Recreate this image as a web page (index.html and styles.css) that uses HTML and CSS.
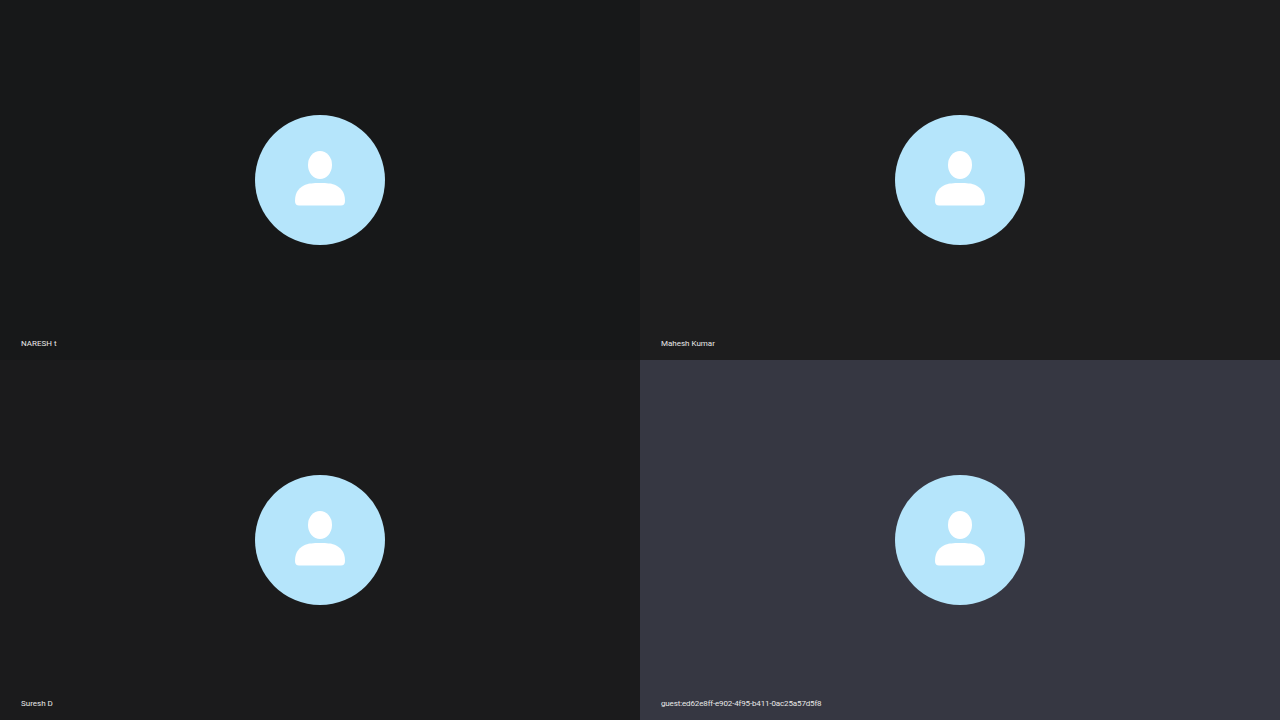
FILE: index.html
```html
<!DOCTYPE html>
<html lang="en">
<head>
  <meta charset="UTF-8">
  <meta name="viewport" content="width=device-width, initial-scale=1.0">
  <title>Video Call</title>
  <link rel="stylesheet" href="styles.css">
</head>
<body>
  <div class="call-grid">
    <div class="tile tile-one">
      <div class="avatar">
        <svg viewBox="0 0 130 130" width="130" height="130"><ellipse cx="65" cy="50" rx="12" ry="14"/><path d="M40 86C40 76 45 72 51 69.500 54 68.500 58 68 65 68s11 .5 14 1.500C85 72 90 76 90 86c0 3-1.500 4.500-4 4.500H44c-2.500 0-4-1.500-4-4.500z"/></svg>
      </div>
      <span class="name">NARESH t</span>
    </div>
    <div class="tile tile-two">
      <div class="avatar">
        <svg viewBox="0 0 130 130" width="130" height="130"><ellipse cx="65" cy="50" rx="12" ry="14"/><path d="M40 86C40 76 45 72 51 69.500 54 68.500 58 68 65 68s11 .5 14 1.500C85 72 90 76 90 86c0 3-1.500 4.500-4 4.500H44c-2.500 0-4-1.500-4-4.500z"/></svg>
      </div>
      <span class="name">Mahesh Kumar</span>
    </div>
    <div class="tile tile-three">
      <div class="avatar">
        <svg viewBox="0 0 130 130" width="130" height="130"><ellipse cx="65" cy="50" rx="12" ry="14"/><path d="M40 86C40 76 45 72 51 69.500 54 68.500 58 68 65 68s11 .5 14 1.500C85 72 90 76 90 86c0 3-1.500 4.500-4 4.500H44c-2.500 0-4-1.500-4-4.500z"/></svg>
      </div>
      <span class="name">Suresh D</span>
    </div>
    <div class="tile tile-four">
      <div class="avatar">
        <svg viewBox="0 0 130 130" width="130" height="130"><ellipse cx="65" cy="50" rx="12" ry="14"/><path d="M40 86C40 76 45 72 51 69.500 54 68.500 58 68 65 68s11 .5 14 1.500C85 72 90 76 90 86c0 3-1.500 4.500-4 4.500H44c-2.500 0-4-1.500-4-4.500z"/></svg>
      </div>
      <span class="name name-guest">guest:ed62e8ff-e902-4f95-b411-0ac25a57d5f8</span>
    </div>
  </div>
</body>
</html>
```

FILE: styles.css
```css
html, body {
  margin: 0;
  height: 100%;
  background-color: #1b1b1c;
  overflow: hidden;
}
.call-grid {
  display: grid;
  grid-template-columns: 640px 640px;
  grid-template-rows: 360px 360px;
}
.tile {
  position: relative;
  display: flex;
  align-items: center;
  justify-content: center;
}
.tile-one { background-color: #171819; }
.tile-two { background-color: #1d1d1e; }
.tile-three { background-color: #1b1b1c; }
.tile-four { background-color: #363742; }
.avatar {
  width: 130px;
  height: 130px;
  border-radius: 50%;
  background-color: #b5e5fb;
}
.avatar svg {
  display: block;
  fill: #ffffff;
}
.name {
  position: absolute;
  left: 21px;
  bottom: 10px;
  font-family: Roboto, Arial, sans-serif;
  font-size: 8px;
  line-height: 12px;
  color: #e8e8e8;
  white-space: nowrap;
}
.name-guest {
  letter-spacing: -0.14px;
}
```
